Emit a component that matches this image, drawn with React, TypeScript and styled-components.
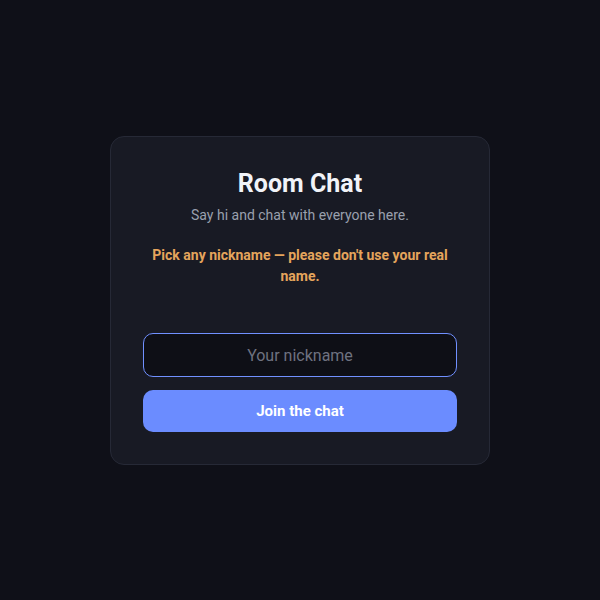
import React from "react";
import styled, { createGlobalStyle } from "styled-components";

const Global = createGlobalStyle`
  html, body { margin: 0; padding: 0; background: #0f1018; }
  body { font-family: Roboto, "Noto Sans", "Liberation Sans", sans-serif; }
  * { box-sizing: border-box; }
`;

const Page = styled.main`
  min-height: 100vh;
  display: flex;
  align-items: center;
  justify-content: center;
  background: #0f1018;
`;

const Card = styled.section`
  width: 380px;
  padding: 32px;
  background: #181a24;
  border: 1px solid #262936;
  border-radius: 14px;
  display: flex;
  flex-direction: column;
  align-items: stretch;
  text-align: center;
`;

const Title = styled.h1`
  margin: 0;
  font-size: 25px;
  line-height: 29px;
  font-weight: 700;
  color: #f1f3f8;
`;

const Subtitle = styled.p`
  margin: 7px 0 0;
  font-size: 14px;
  line-height: 20px;
  color: #9aa0ae;
`;

const Warning = styled.p`
  margin: 20px 0 0;
  font-size: 14px;
  line-height: 21px;
  font-weight: 700;
  color: #e5a55c;
`;

const Form = styled.form`
  margin-top: 46px;
  display: flex;
  flex-direction: column;
  gap: 13px;
`;

const Input = styled.input`
  height: 44px;
  width: 100%;
  padding: 1px 0 0;
  border: 1px solid #7090ff;
  border-radius: 10px;
  background: #0e0f16;
  color: #e8eaf0;
  font-family: inherit;
  font-size: 16px;
  text-align: center;
  outline: none;
  caret-color: #ffffff;
  &::placeholder { color: #6e7280; }
`;

const Button = styled.button`
  height: 42px;
  width: 100%;
  border: none;
  border-radius: 10px;
  background: #6b8cff;
  color: #ffffff;
  font-family: inherit;
  font-size: 15px;
  font-weight: 700;
  cursor: pointer;
`;

export default function App() {
  return (
    <>
      <Global />
      <Page>
        <Card>
          <Title>Room Chat</Title>
          <Subtitle>Say hi and chat with everyone here.</Subtitle>
          <Warning>Pick any nickname — please don't use your real name.</Warning>
          <Form onSubmit={(e) => e.preventDefault()}>
            <Input placeholder="Your nickname" autoFocus />
            <Button type="submit">Join the chat</Button>
          </Form>
        </Card>
      </Page>
    </>
  );
}
